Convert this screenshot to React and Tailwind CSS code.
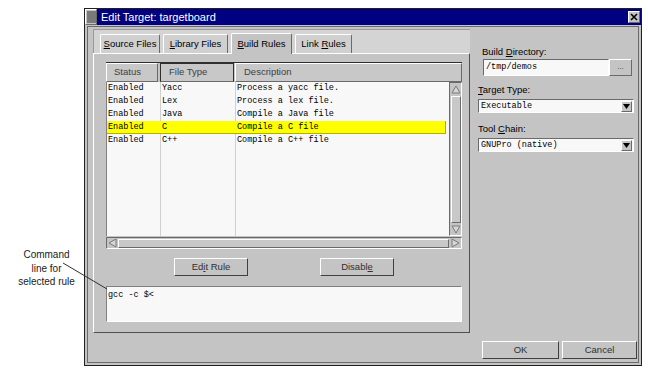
import React from 'react';

const raised = 'border border-t-white border-l-white border-r-[#6a6a6a] border-b-[#6a6a6a]';
const sunken = 'border border-t-[#6a6a6a] border-l-[#6a6a6a] border-r-white border-b-white';
const mono = "font-['Liberation_Mono','Courier_New',monospace] text-[8.5px]";

const rows = [
  ['Enabled', 'Yacc', 'Process a yacc file.'],
  ['Enabled', 'Lex', 'Process a lex file.'],
  ['Enabled', 'Java', 'Compile a Java file'],
  ['Enabled', 'C', 'Compile a C file'],
  ['Enabled', 'C++', 'Compile a C++ file'],
];

function Arrow({ dir }) {
  const pts = {
    up: '5,1 9,8 1,8',
    down: '1,2 9,2 5,9',
    left: '1,5 8,1 8,9',
    right: '2,1 9,5 2,9',
  }[dir];
  return (
    <svg width="10" height="10" viewBox="0 0 10 10">
      <polygon points={pts} fill="#d6d6d6" stroke="#7a7a7a" strokeWidth="1" />
    </svg>
  );
}

function Select({ value }) {
  return (
    <div className={`flex items-center h-[14px] w-[156px] bg-[#f8f8f8] ${sunken}`}>
      <span className={`${mono} flex-1 pl-[2px] leading-none`}>{value}</span>
      <div className={`w-[11px] h-[11px] mr-[1px] flex items-center justify-center bg-[#c4c4c4] ${raised}`}>
        <svg width="7" height="5" viewBox="0 0 7 5">
          <polygon points="0,0 7,0 3.5,5" fill="#000" />
        </svg>
      </div>
    </div>
  );
}

function Tab({ children, selected, w }) {
  return (
    <div
      className={`flex items-center justify-center ${w} border-t border-l border-r border-t-white border-l-white border-r-[#6a6a6a] rounded-t-[2px] ${
        selected ? 'h-[21px] bg-[#c4c4c4] relative top-[1px] z-10' : 'h-[19px] bg-[#d0d0d0]'
      }`}
    >
      {children}
    </div>
  );
}

export default function App() {
  return (
    <div className="relative w-[648px] h-[373px] bg-white overflow-hidden font-['Liberation_Sans',Arial,sans-serif] text-black">
      {/* callout on the left */}
      <div className="absolute left-[8px] top-[248px] w-[77px] text-center text-[10px] leading-[13.5px] text-[#1a1a1a]">
        Command
        <br />
        line for
        <br />
        selected rule
      </div>

      {/* the dialog window */}
      <div className="absolute left-[84px] top-[8px] w-[558px] h-[358px] border border-[#202020] bg-[#c4c4c4] flex flex-col">
        {/* title bar */}
        <div className="h-[16px] flex items-center bg-[#000080]">
          <div className={`w-[12px] h-[16px] bg-[#c4c4c4] flex items-center justify-center ${raised}`}>
            <svg width="9" height="12" viewBox="0 0 9 12">
              {[1, 3, 5, 7, 9, 11].map((y) => (
                <line key={y} x1="0" y1={y} x2="9" y2={y} stroke="#303030" strokeWidth="1" />
              ))}
            </svg>
          </div>
          <span className="ml-[4px] text-[11px] text-white leading-none flex-1">Edit Target: targetboard</span>
          <div className={`w-[12px] h-[12px] mr-[1px] bg-[#c4c4c4] flex items-center justify-center ${raised}`}>
            <svg width="8" height="8" viewBox="0 0 8 8">
              <path d="M1 1 L7 7 M7 1 L1 7" stroke="#000" strokeWidth="1.6" />
            </svg>
          </div>
        </div>

        {/* client area */}
        <div className="flex-1 mx-[2px] mt-[1px] mb-[2px] border border-[#6a6a6a] flex text-[9.5px]">
          {/* notebook */}
          <div className="ml-[5px] mt-[2px] w-[377px] h-[304px] flex flex-col">
            <div className="h-[24px] bg-[#d4d4d4] border-l border-t border-[#9a9a9a] flex items-end pl-[6px] gap-[3px]">
              <Tab w="w-[60px]">
                <span><u>S</u>ource Files</span>
              </Tab>
              <Tab w="w-[65px]">
                <span><u>L</u>ibrary Files</span>
              </Tab>
              <Tab w="w-[61px]" selected>
                <span><u>B</u>uild Rules</span>
              </Tab>
              <Tab w="w-[57px]">
                <span>Link <u>R</u>ules</span>
              </Tab>
            </div>

            {/* tab panel */}
            <div className={`flex-1 bg-[#c4c4c4] ${raised} border-r-[#505050] border-b-[#505050] pl-[12px] pt-[8px]`}>
              <div className="w-[356px] flex flex-col">
                {/* header */}
                <div className="h-[20px] border-t border-[#303030] flex text-[#404040]">
                  <div className={`w-[52px] h-[19px] flex items-center pl-[7px] bg-[#c8c8c8] ${raised}`}>Status</div>
                  <div className="w-[2px]" />
                  <div className="w-[74px] h-[19px] flex items-center pl-[8px] bg-[#c8c8c8] border border-[#303030] border-b-[#6a6a6a]">File Type</div>
                  <div className="w-[1px]" />
                  <div className={`flex-1 h-[19px] flex items-center pl-[8px] bg-[#c8c8c8] ${raised}`}>Description</div>
                </div>

                {/* list + vertical scrollbar */}
                <div className="h-[154px] flex">
                  <div className="relative w-[343px] bg-[#f8f8f8] border-l border-[#808080]">
                    <div className="absolute left-[53px] top-0 bottom-0 w-px bg-[#d0d0d0]" />
                    <div className="absolute left-[128px] top-0 bottom-0 w-px bg-[#d0d0d0]" />
                    <div className={`relative ${mono}`}>
                      {rows.map((r, i) => (
                        <div
                          key={i}
                          className={`h-[13px] flex items-center ${
                            i === 3 ? 'bg-[#ffff00] border-r border-b border-[#b0b000] w-[339px]' : ''
                          }`}
                        >
                          <span className="w-[54px] pl-[1px]">{r[0]}</span>
                          <span className="w-[75px] pl-[1px]">{r[1]}</span>
                          <span className="pl-[1px]">{r[2]}</span>
                        </div>
                      ))}
                    </div>
                  </div>
                  <div className={`w-[13px] flex flex-col items-center bg-[#c4c4c4] ${sunken}`}>
                    <div className="h-[13px] flex items-center justify-center">
                      <Arrow dir="up" />
                    </div>
                    <div className={`flex-1 w-[10px] bg-[#c8c8c8] ${raised}`} />
                    <div className="h-[12px] flex items-center justify-center">
                      <Arrow dir="down" />
                    </div>
                  </div>
                </div>

                {/* horizontal scrollbar */}
                <div className={`mt-[1px] h-[12px] flex items-center bg-[#c4c4c4] ${sunken}`}>
                  <div className="w-[11px] flex items-center justify-center">
                    <Arrow dir="left" />
                  </div>
                  <div className={`flex-1 h-[9px] bg-[#c8c8c8] ${raised}`} />
                  <div className="w-[12px] flex items-center justify-center">
                    <Arrow dir="right" />
                  </div>
                </div>

                {/* buttons */}
                <div className="mt-[9px] flex justify-center gap-[72px]">
                  <div className={`w-[74px] h-[18px] flex items-center justify-center text-[#303030] ${raised} border-r-[#404040] border-b-[#404040]`}>
                    <span>Ed<u>i</u>t Rule</span>
                  </div>
                  <div className={`w-[74px] h-[18px] flex items-center justify-center text-[#303030] ${raised} border-r-[#404040] border-b-[#404040]`}>
                    <span>Disabl<u>e</u></span>
                  </div>
                </div>

                {/* command line */}
                <div className={`mt-[10px] h-[36px] bg-[#f8f8f8] ${sunken} border-t-[#808080] border-l-[#808080] pl-[1px] pt-[2px] ${mono}`}>
                  gcc -c $&lt;
                </div>
              </div>
            </div>
          </div>

          {/* right column */}
          <div className="ml-[8px] w-[160px] flex flex-col">
            <div className="mt-[19px] pl-[4px] leading-[12px]">
              Build <u>D</u>irectory:
            </div>
            <div className="mt-[1px] pl-[5px] flex h-[17px]">
              <div className={`w-[126px] h-[17px] bg-[#f8f8f8] flex items-center pl-[2px] ${sunken} ${mono}`}>/tmp/demos</div>
              <div className={`w-[23px] h-[17px] flex items-end justify-center pb-[2px] text-[8px] text-[#404040] ${raised}`}>...</div>
            </div>
            <div className="mt-[8px] leading-[12px]">
              <u>T</u>arget Type:
            </div>
            <div className="mt-[3px]">
              <Select value="Executable" />
            </div>
            <div className="mt-[10px] leading-[12px]">
              Tool <u>C</u>hain:
            </div>
            <div className="mt-[3px]">
              <Select value="GNUPro (native)" />
            </div>

            <div className="mt-auto mb-[3px] flex gap-[3px] pl-[4px]">
              <div className={`w-[77px] h-[18px] flex items-center justify-center text-[#303030] ${raised} border-r-[#404040] border-b-[#404040]`}>OK</div>
              <div className={`w-[75px] h-[18px] flex items-center justify-center text-[#303030] ${raised} border-r-[#404040] border-b-[#404040]`}>Cancel</div>
            </div>
          </div>
        </div>
      </div>

      {/* leader line of the callout */}
      <svg className="absolute left-0 top-0 pointer-events-none" width="648" height="373">
        <line x1="63" y1="263" x2="107" y2="289" stroke="#303030" strokeWidth="1" />
      </svg>
    </div>
  );
}
